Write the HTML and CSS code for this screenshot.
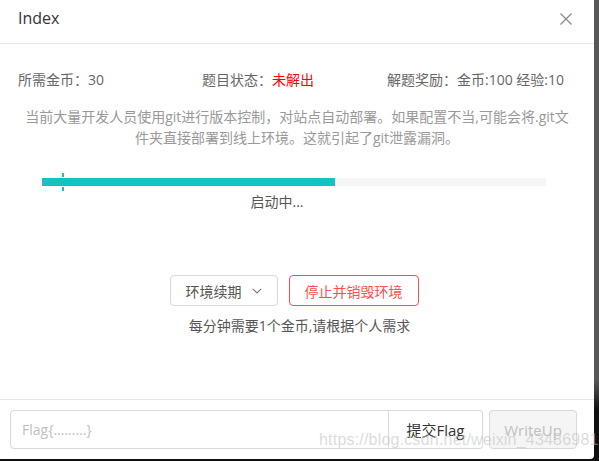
FILE: index.html
```html
<!DOCTYPE html>
<html lang="zh">
<head>
<meta charset="utf-8">
<title>Index</title>
<link rel="stylesheet" href="styles.css">
</head>
<body>
<div class="modal">
  <div class="modal-header">
    <span class="modal-title">Index</span>
    <svg class="close" width="12" height="12" viewBox="0 0 12 12"><path d="M0.5 0.5L11.5 11.5M11.5 0.5L0.5 11.5" stroke="#8c8c8c" stroke-width="1.3" fill="none"/></svg>
  </div>
  <div class="modal-body">
    <div class="info">
      <span>所需金币：30</span>
      <span>题目状态：<em class="red">未解出</em></span>
      <span>解题奖励：金币:100 经验:10</span>
    </div>
    <p class="desc">当前大量开发人员使用git进行版本控制，对站点自动部署。如果配置不当,可能会将.git文件夹直接部署到线上环境。这就引起了git泄露漏洞。</p>
    <div class="progress">
      <div class="track"><div class="fill" style="width:58.2%"></div></div>
      <span class="tick tick-top"></span>
      <span class="tick tick-bottom"></span>
    </div>
    <div class="status">启动中...</div>
    <div class="actions">
      <button class="btn">环境续期
        <svg width="10" height="6" viewBox="0 0 10 6"><path d="M0.8 0.8L5 5L9.2 0.8" stroke="#777" stroke-width="1.1" fill="none"/></svg>
      </button>
      <button class="btn btn-danger">停止并销毁环境</button>
    </div>
    <div class="note">每分钟需要1个金币,请根据个人需求</div>
  </div>
  <div class="modal-footer">
    <div class="input-group">
      <input class="flag-input" type="text" placeholder="Flag{.........}">
      <button class="submit">提交Flag</button>
    </div>
    <button class="writeup" disabled>WriteUp</button>
  </div>
  <div class="watermark">https://blog.csdn.net/weixin_43486981</div>
</div>
</body>
</html>
```
FILE: styles.css
```css
html, body {
  margin: 0;
  padding: 0;
}
body {
  width: 599px;
  height: 461px;
  overflow: hidden;
  background: linear-gradient(#575757 0, #575757 380px, #101010 410px, #101010 100%);
  font-family: "Open Sans", "Noto Sans CJK SC", sans-serif;
}
.modal {
  position: relative;
  width: 594px;
  height: 459px;
  background: #fff;
  border-radius: 0 0 4px 0;
  display: flex;
  flex-direction: column;
  box-sizing: border-box;
}
.modal-header {
  height: 44px;
  box-sizing: border-box;
  border-bottom: 1px solid #e8e8e8;
  display: flex;
  align-items: center;
  justify-content: space-between;
  padding: 0 22px 0 18px;
}
.modal-title {
  font-size: 16px;
  color: #333;
  margin-top: -7px;
}
.close {
  margin-top: -6px;
}
.modal-body {
  flex: 1;
  padding: 27px 18px 0;
}
.info {
  display: grid;
  grid-template-columns: 184px 185px 1fr;
  font-size: 14px;
  line-height: 18px;
  color: #666;
}
.info .red {
  font-style: normal;
  color: #f00;
}
.desc {
  margin: 17px 0 0;
  padding: 0 4px;
  text-align: center;
  font-size: 14px;
  line-height: 21px;
  color: #999;
}
.progress {
  position: relative;
  margin: 24px 30px 0 24px;
  padding: 6px 0;
}
.track {
  height: 8px;
  background: #f5f5f5;
}
.fill {
  height: 8px;
  background: #13c2c2;
}
.tick {
  position: absolute;
  left: 20px;
  width: 2px;
  height: 4px;
  background: #13c2c2;
}
.tick-top {
  top: 1px;
}
.tick-bottom {
  bottom: 1px;
}
.status {
  text-align: center;
  padding-right: 40px;
  font-size: 14px;
  line-height: 20px;
  color: #555;
  margin-top: 0;
}
.actions {
  display: flex;
  justify-content: center;
  gap: 11px;
  margin-top: 63px;
  padding-right: 6px;
}
.btn {
  height: 31px;
  padding: 0 15px;
  border: 1px solid #d9d9d9;
  border-radius: 4px;
  background: #fff;
  color: #555;
  font-family: inherit;
  font-size: 14px;
  display: flex;
  align-items: center;
  gap: 10px;
}
.btn-danger {
  border-color: #ff4d4f;
  color: #ff4d4f;
}
.note {
  text-align: center;
  font-size: 14px;
  line-height: 20px;
  color: #555;
  margin-top: 10px;
  padding-left: 5px;
}
.modal-footer {
  border-top: 1px solid #e8e8e8;
  padding: 10px 17px 10px 10px;
  display: flex;
  gap: 6px;
}
.input-group {
  display: flex;
  height: 39px;
}
.flag-input {
  width: 379px;
  box-sizing: border-box;
  height: 39px;
  border: 1px solid #d9d9d9;
  border-radius: 4px 0 0 4px;
  padding: 0 11px;
  font-family: inherit;
  font-size: 14px;
  outline: none;
}
.flag-input::placeholder {
  color: #bfbfbf;
}
.submit {
  width: 94px;
  height: 39px;
  border: 1px solid #d9d9d9;
  border-left: none;
  border-radius: 0 4px 4px 0;
  background: #fff;
  color: #333;
  font-family: inherit;
  font-size: 15px;
  padding: 0;
}
.writeup {
  width: 89px;
  height: 39px;
  border: 1px solid #d9d9d9;
  border-radius: 4px;
  background: #f5f5f5;
  color: #bfbfbf;
  font-family: inherit;
  font-size: 15px;
  padding: 0;
}
.watermark {
  position: absolute;
  left: 319px;
  top: 431px;
  font-family: "Liberation Sans", sans-serif;
  font-size: 16px;
  letter-spacing: 0.2px;
  color: rgba(190, 190, 190, 0.55);
  pointer-events: none;
}
```
